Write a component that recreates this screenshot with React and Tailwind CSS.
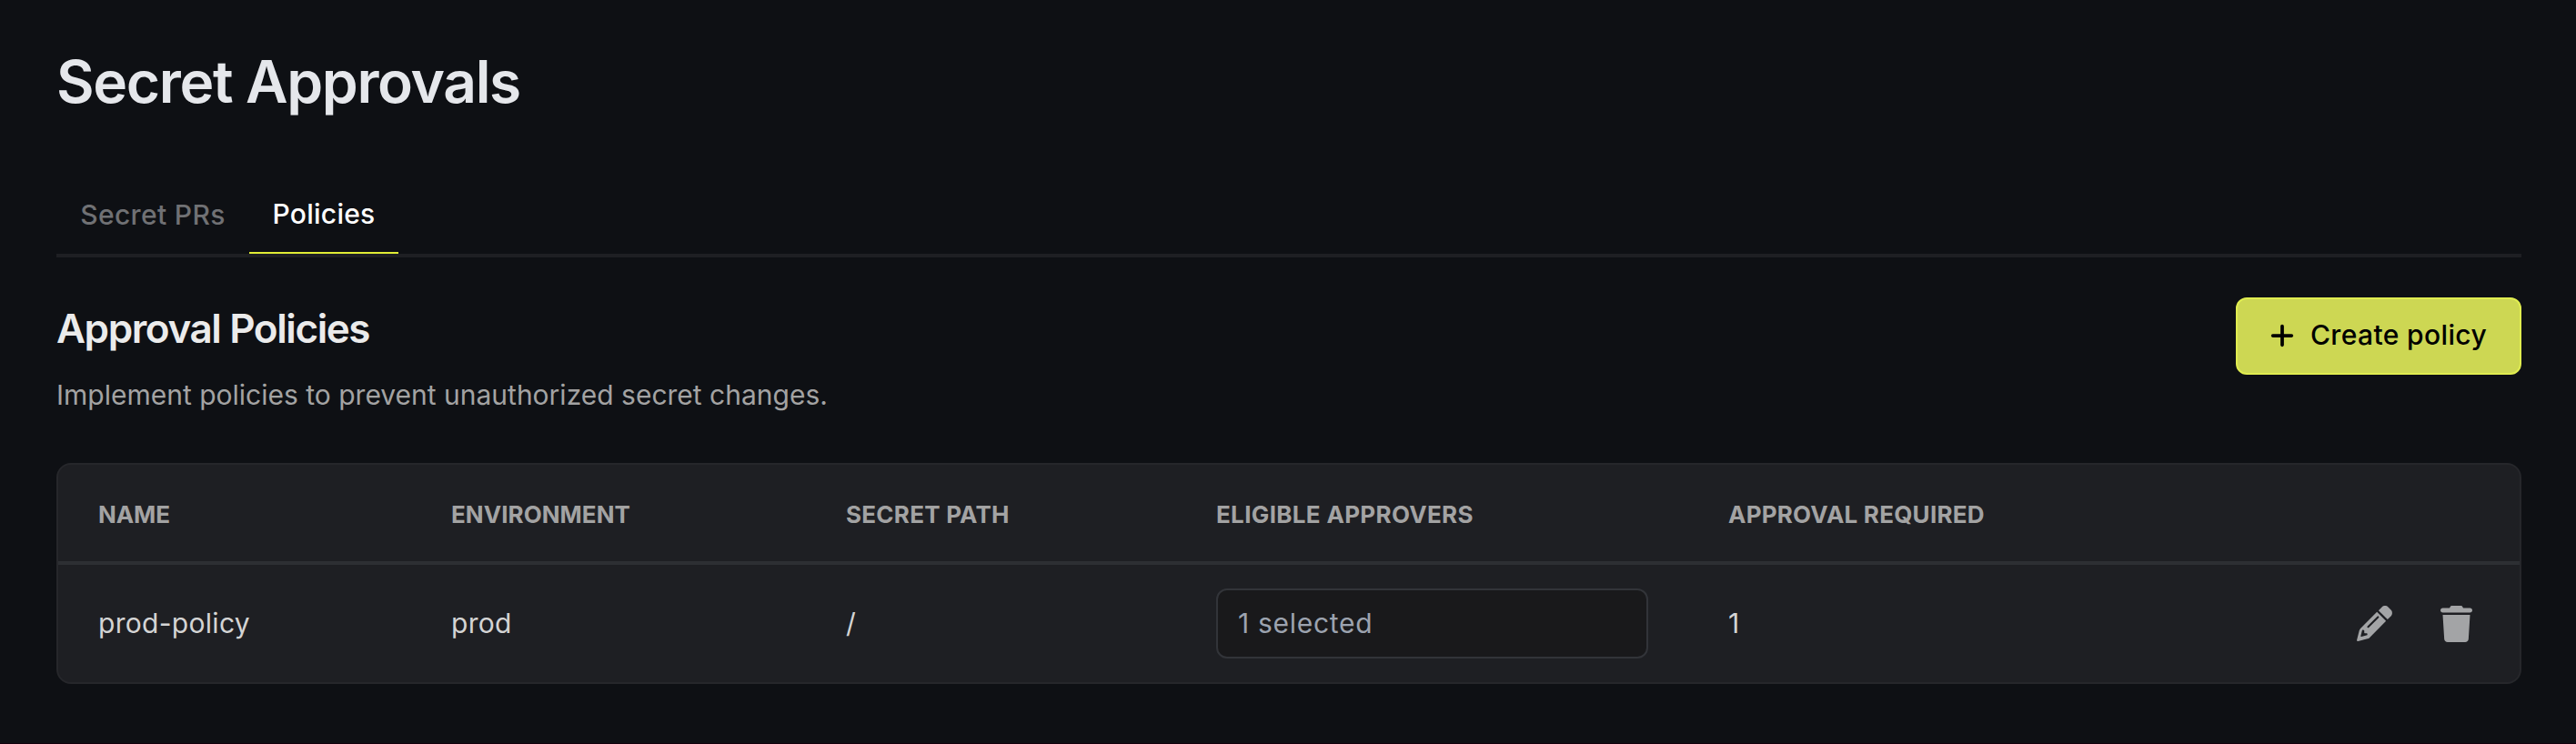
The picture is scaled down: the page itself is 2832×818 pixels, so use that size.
import { FaPlus, FaTrash } from "react-icons/fa6";

const columns = [
  { name: "Name", style: "-tracking-[0.1px]" },
  { name: "Environment", style: "tracking-[0.05px]" },
  { name: "Secret Path", style: "tracking-[0.25px]" },
  { name: "Eligible Approvers", style: "tracking-[0.33px]" },
  { name: "Approval Required", style: "tracking-[0.23px]" },
];
const grid = "grid grid-cols-[388px_434px_407px_563px_1fr_auto] items-center pl-[44px] pr-[52px]";

function PencilIcon() {
  return (
    <svg viewBox="0 0 512 512" className="size-[39px]">
      <g fill="currentColor">
        <path d="M314 68 362 20c25-25 66-25 91 0l39 39c25 25 25 66 0 91l-48 48z" />
        <path d="M291 90 53 328q-14 14-18 32L1 494q-2 20 17 17l136-34q18-4 32-18L422 220z" />
      </g>
      <path d="M306 163 164 305" fill="none" stroke="#1e1f23" strokeWidth="28" strokeLinecap="round" />
      <path d="m78 352-21 84q-2 12 10 10l84-22q6-16-3-28h-32q-8 0-8-8v-30q-12-14-30-6z" fill="#1e1f23" />
    </svg>
  );
}

export default function App() {
  return (
    <main className="h-[818px] w-[2832px] overflow-hidden border-b border-[#12000c] bg-[#0e1014] px-[60px] pt-[50px] font-['Inter',sans-serif] text-[30px] text-[#d4d4d4]">
      <div className="ml-[2px] w-[2710px]">
        <h1 className="h-[80px] text-[64px] leading-[80px] font-semibold tracking-[-1.33px] text-[#e5e7eb]">Secret Approvals</h1>
        <nav className="mt-[59px] flex h-[94px] items-stretch border-b-4 border-[#1e1f23]">
          <button className="w-[212px] pt-[4px] font-medium tracking-[0.35px] text-[#707174]">Secret PRs</button>
          <button className="w-[164px] border-b-2 border-[#e0ed34] pt-[4px] font-medium tracking-[0.25px] text-white">Policies</button>
        </nav>
        <section className="flex items-start justify-between pt-[44px]">
          <div>
            <h2 className="h-[60px] pt-[4px] text-[44px] leading-[60px] font-semibold tracking-[-1.4px] text-[#ebebeb]">Approval Policies</h2>
            <p className="mt-[25px] leading-[44px] text-[#a3a3a3]">Implement policies to prevent unauthorized secret changes.</p>
          </div>
          <button className="flex h-[85px] w-[314px] items-center rounded-[12px] border-2 border-[#e0ed50] bg-[#cdd753] pl-[34px] pb-px font-medium tracking-[0.37px] text-black">
            <FaPlus className="mr-[16px] size-[30px]" />
            <span className="pb-px">Create policy</span>
          </button>
        </section>
        <section className="mt-[53px] h-[243px] overflow-hidden rounded-[16px] border-2 border-[#26272b] bg-[#1e1f23]">
          <div className={`${grid} h-[110px] border-b-4 border-[#2d2f33] pt-[2px] text-[26px] font-bold text-[#a3a3a3] uppercase`}>
            {columns.map(({ name, style }) => (
              <span key={name} className={style}>{name}</span>
            ))}
          </div>
          <div className={`${grid} h-[129px] tracking-[0.3px]`}>
            <span>prod-policy</span>
            <span>prod</span>
            <span>/</span>
            <div className="flex h-[77px] w-[475px] items-center rounded-[12px] border-2 border-[#323439] bg-[#19191b] px-[22px] tracking-[0.7px] text-[#9ca3af]">1 selected</div>
            <span>1</span>
            <div className="flex items-center gap-[53px] text-[#a3a4a6]">
              <PencilIcon />
              <FaTrash className="h-[40px] w-[35px]" />
            </div>
          </div>
        </section>
      </div>
    </main>
  );
}
